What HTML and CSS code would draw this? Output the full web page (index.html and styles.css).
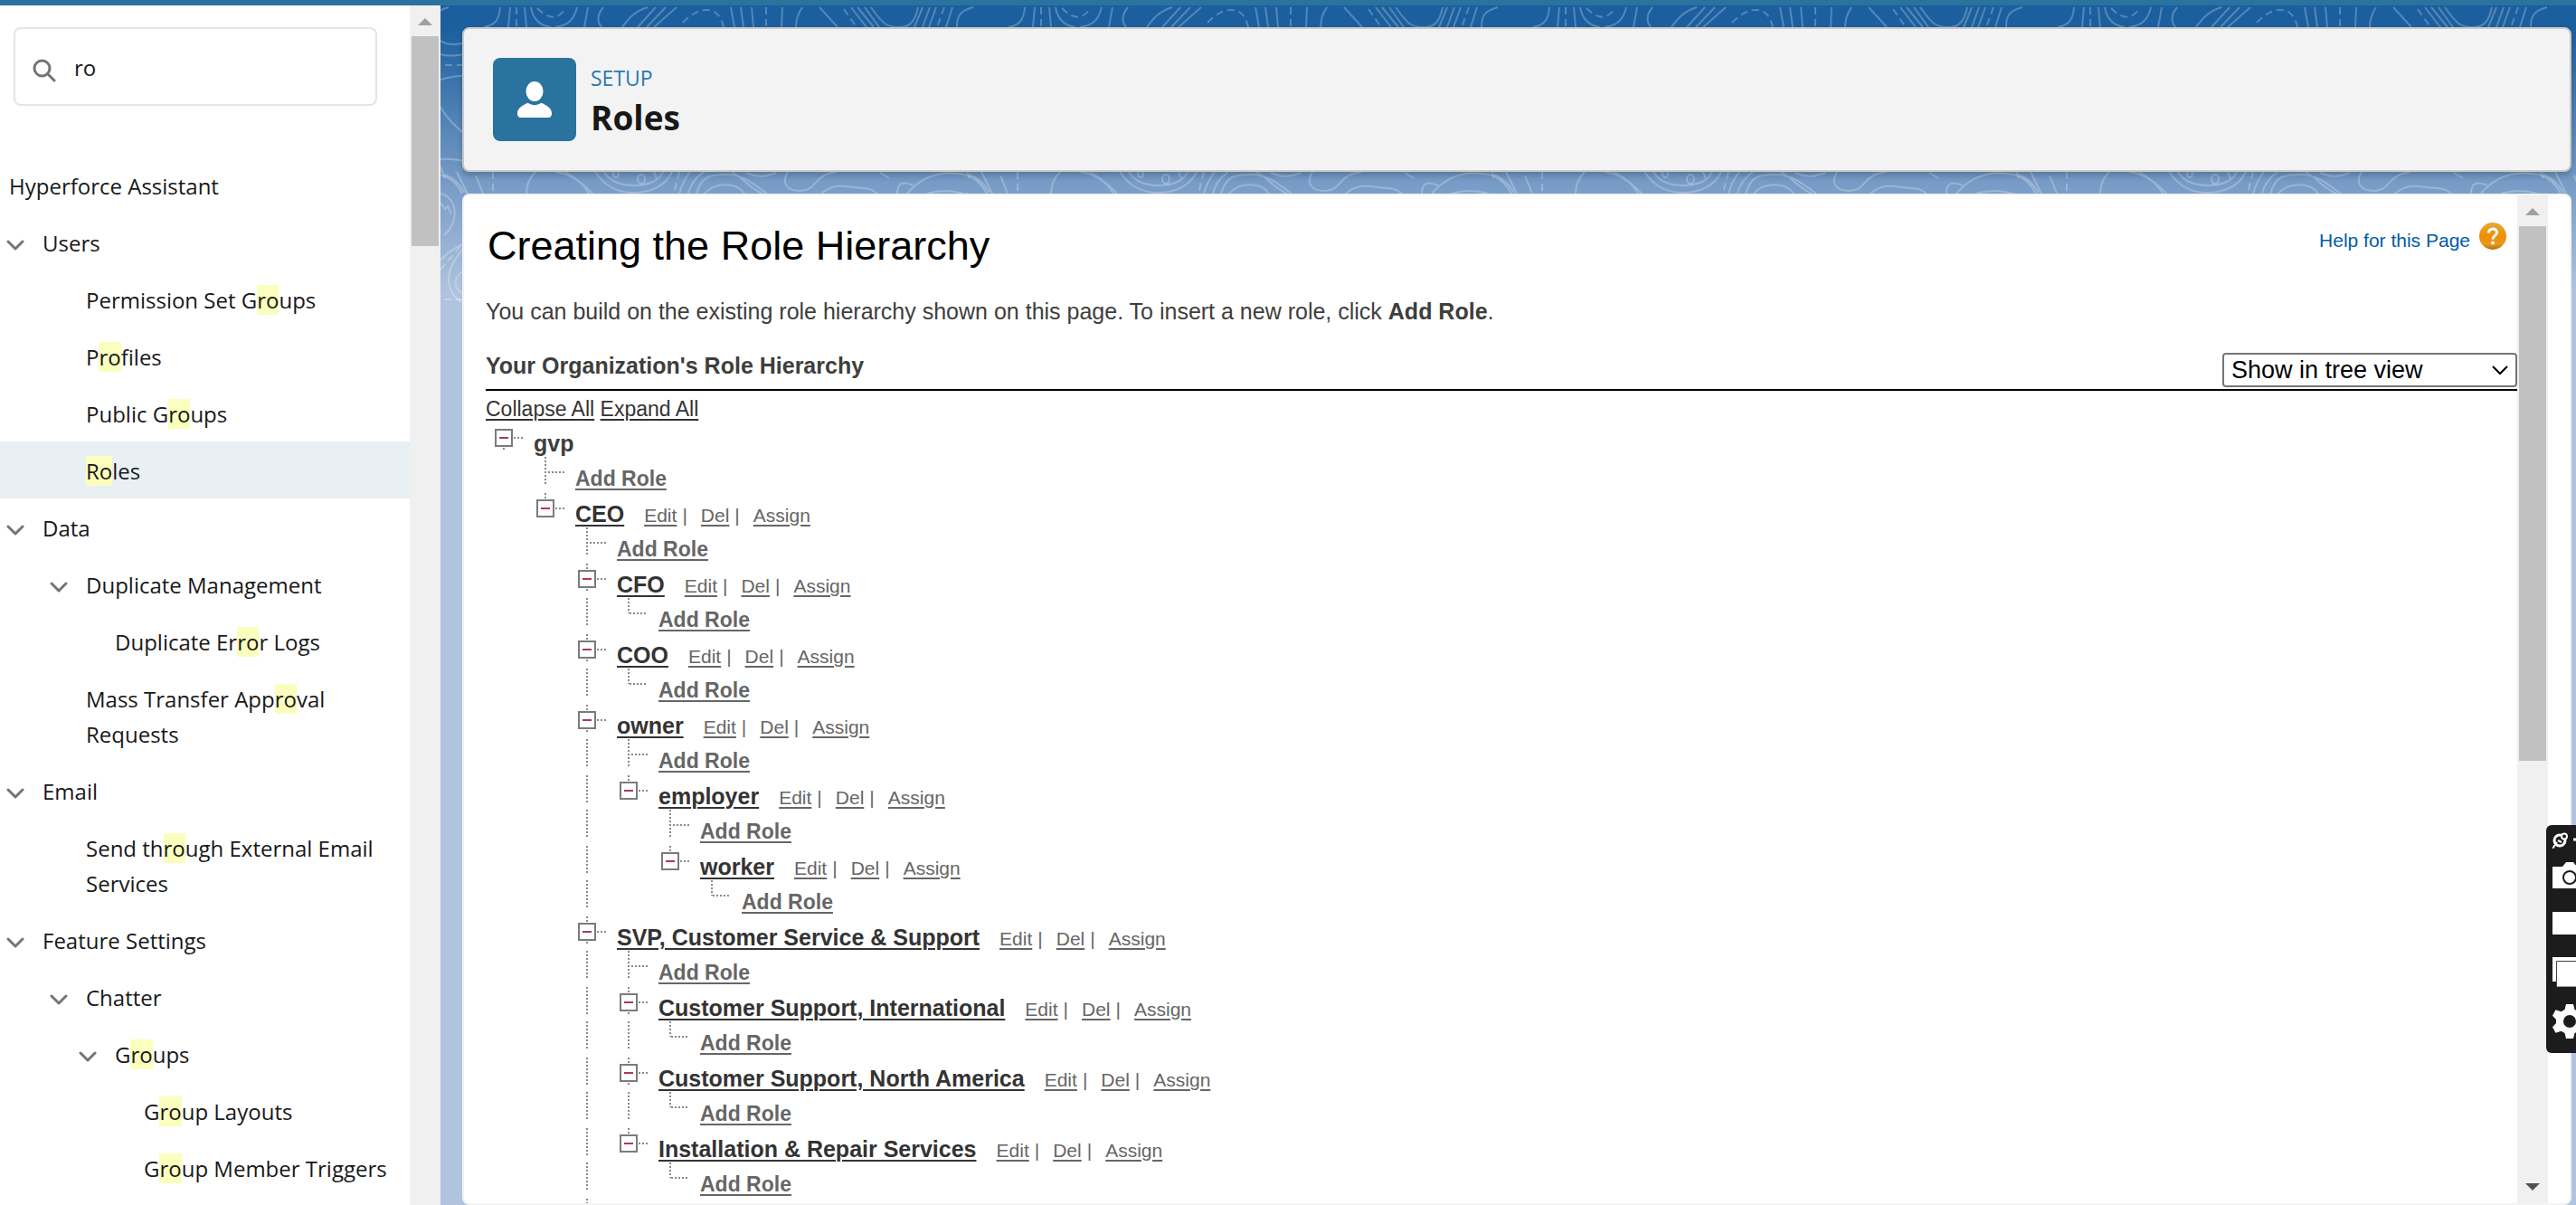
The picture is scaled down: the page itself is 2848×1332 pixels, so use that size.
FILE: index.html
```html
<!DOCTYPE html>
<html lang="en">
<head>
<meta charset="utf-8">
<title>Roles | Setup</title>
<link rel="stylesheet" href="styles.css">
</head>
<body>
<svg class="defs" aria-hidden="true">
  <defs>
    <symbol id="chevron" viewBox="0 0 20 12"><path d="M2 2l8 8 8-8" fill="none" stroke="#747474" stroke-width="3" stroke-linecap="round" stroke-linejoin="round"/></symbol>
    <symbol id="up" viewBox="0 0 16 8"><path d="M8 0l8 8H0z"/></symbol>
    <symbol id="down" viewBox="0 0 16 8"><path d="M0 0h16L8 8z"/></symbol>
    <g id="minus"><rect x="8" y="8" width="18" height="18" fill="#fff" stroke="#7b7b7b" stroke-width="2"/><path d="M12 17h10" stroke="#b03a4c" stroke-width="2"/><path class="dots" d="M28 17h11"/></g>
    <g id="v"><path class="dots" d="M17 0v31"/></g>
    <g id="tee"><path class="dots" d="M17 0v31M20 17h18"/></g>
    <g id="elbow"><path class="dots" d="M17 0v17M18 17h20"/></g>
    <g id="root"><use href="#minus"/><path class="dots" d="M17 28v2"/></g>
    <g id="last"><use href="#minus"/><path class="dots" d="M17 0v6"/></g>
    <g id="mid"><use href="#minus"/><path class="dots" d="M17 0v6M17 28v2"/></g>
    <g id="contours">
      <path d="M66 8C65 22 60 28 48 30M77 8l-2 22M93 8l2 22M100 8c2 12 8 20 22 22M151 8c-3 12-8 20-24 22M163 8l-4 22M180 8q-10 12-2 22M229 8c-16 5-22 14-28 22M238 8l-20 22M249 8l-21 22M261 8l-25 22M321 8l4 22M332 8l3 22M344 8l2 22M378 8l-1 22M400 8q-7 10-7 22M419 8l20 22M454 8l17 22M461 8l18 22M469 8l16 22M476 8c14 20 18 22 32 22 12 0 17-8 20-22M533 8l-9 22M541 8l-8 22M548 8l-8 22M566 8l-7 22M589 8c-15 4-18 10-18 22"/>
      <path stroke-dasharray="8 5" d="M84 8v22M107 9c12 12 22 14 32 0M268 25c8-8 16-14 26-14s16 6 19 19M360 8v22M446 10l14 20M557 8l-8 22"/>
      <path d="M0 45q12 8 34 0M0 60q12 4 34-2M0 88q12-4 34-5M0 118q8 16 34 36M0 176q16-1 34 4M0 184l5 13M5 193q14 6 22 20M0 214c18 4 22 30 4 46M0 224l5 7 3-3 4 9M0 288q8-10 24-18M30 270c-30 30-24 54-6 64M24 300c-10 8-10 18 0 24"/>
      <path stroke-dasharray="8 5" d="M5 72h30M0 298l24-28M4 331h20"/>
      <path d="M39 194l8 20M105 190q-10 10-10 24M127 190c16 2 30 12 41 24M138 190q18 10 26 24M171 190c10 14 22 23 42 23s36-8 43-23M181 190c6 10 18 15 33 15s28-5 32-15M276 190q-8 10-12 24M291 190q-14 10-17 24M283 214c6-20 16-21 33-21 20 0 32 12 45 21M292 214c10-12 34-14 44 0M322 190c14 8 20 18 34 24M338 191c14 6 22 4 33 0M384 190c-8 14 0 21 14 21 18 0 14-18 40-21M421 214c16-14 30-6 46-6 8 0 12 3 16 6M486 191l10 6M505 214c0-12 6-14 18-9M516 214c18-22 40-24 56-22 16 1 26 10 32 22M538 214q20-6 40 0M598 190l12 24"/>
      <ellipse cx="222" cy="198" rx="4" ry="5"/><ellipse cx="194" cy="192" rx="3" ry="4"/>
      <path stroke-dasharray="8 5" d="M58 190v24M264 190l-6 24M236 190l4 10"/>
    </g>
    <pattern id="topo" width="580" height="420" patternUnits="userSpaceOnUse"><g fill="none" stroke="#fff" stroke-opacity=".25" stroke-width="2"><use href="#contours"/><use href="#contours" x="-580"/></g></pattern>
  </defs>
</svg>

<div class="app">
  <nav class="sidebar" aria-label="Setup">
    <div class="side-body">
      <label class="search">
        <svg viewBox="0 0 26 26" aria-hidden="true"><circle cx="10.500" cy="10.500" r="8.500" fill="none" stroke="#747474" stroke-width="3"/><path d="M16.500 16.500L24 24" stroke="#747474" stroke-width="3" stroke-linecap="round"/></svg>
        <input type="text" value="ro" aria-label="Quick Find">
      </label>
      <ul class="menu">
        <li class="top"><a href="#">Hyperforce Assistant</a></li>
        <li class="l1"><button aria-label="Toggle Users"><svg><use href="#chevron"/></svg></button><a href="#">Users</a></li>
        <li class="l2"><a href="#">Permission Set G<mark>ro</mark>ups</a></li>
        <li class="l2"><a href="#">P<mark>ro</mark>files</a></li>
        <li class="l2"><a href="#">Public G<mark>ro</mark>ups</a></li>
        <li class="l2 active"><a href="#"><mark>Ro</mark>les</a></li>
        <li class="l1"><button aria-label="Toggle Data"><svg><use href="#chevron"/></svg></button><a href="#">Data</a></li>
        <li class="l2"><button aria-label="Toggle Duplicate Management"><svg><use href="#chevron"/></svg></button><a href="#">Duplicate Management</a></li>
        <li class="l3"><a href="#">Duplicate Er<mark>ro</mark>r Logs</a></li>
        <li class="l2"><a href="#">Mass Transfer App<mark>ro</mark>val Requests</a></li>
        <li class="l1"><button aria-label="Toggle Email"><svg><use href="#chevron"/></svg></button><a href="#">Email</a></li>
        <li class="l2"><a href="#">Send th<mark>ro</mark>ugh External Email Services</a></li>
        <li class="l1"><button aria-label="Toggle Feature Settings"><svg><use href="#chevron"/></svg></button><a href="#">Feature Settings</a></li>
        <li class="l2"><button aria-label="Toggle Chatter"><svg><use href="#chevron"/></svg></button><a href="#">Chatter</a></li>
        <li class="l3"><button aria-label="Toggle Groups"><svg><use href="#chevron"/></svg></button><a href="#">G<mark>ro</mark>ups</a></li>
        <li class="l4"><a href="#">G<mark>ro</mark>up Layouts</a></li>
        <li class="l4"><a href="#">G<mark>ro</mark>up Member Triggers</a></li>
      </ul>
    </div>
    <div class="scrollbar"><svg class="arrow"><use href="#up"/></svg><div class="thumb side-thumb"></div></div>
  </nav>

  <main class="stage">
    <svg class="topo" aria-hidden="true"><g transform="translate(0 -6)"><rect width="100%" height="420" fill="url(#topo)"/></g></svg>
    <header class="card">
      <div class="badge"><svg viewBox="0 0 40 42" aria-hidden="true"><ellipse cx="20" cy="11.500" rx="10" ry="11.500" fill="#fff"/><path d="M12 25q8 5 16 0c6 3 12 6 12 12q0 5-4 5H4q-4 0-4-5c0-6 6-9 12-12z" fill="#fff"/></svg></div>
      <div class="heading"><p class="eyebrow">SETUP</p><h1>Roles</h1></div>
    </header>
    <section class="panel">
      <div class="content">
        <div class="title-row">
          <h2>Creating the Role Hierarchy</h2>
          <a class="help" href="#">Help for this Page
            <svg viewBox="0 0 30 30" aria-hidden="true"><defs><linearGradient id="amber" x2="0" y2="1"><stop offset="0" stop-color="#e5a93c"/><stop offset=".5" stop-color="#ef8e00"/><stop offset=".8" stop-color="#e99a1c"/><stop offset="1" stop-color="#a9700f"/></linearGradient></defs><circle cx="15" cy="15" r="15" fill="url(#amber)"/><path d="M10.500 11.500c0-6 9-6 9-.5 0 3.500-4.500 3.500-4.500 7.500" fill="none" stroke="#fff" stroke-width="3"/><circle cx="15" cy="22.500" r="2" fill="#fff"/></svg></a>
        </div>
        <p class="intro">You can build on the existing role hierarchy shown on this page. To insert a new role, click <b>Add Role</b>.</p>
        <div class="sub-row">
          <h3>Your Organization's Role Hierarchy</h3>
          <div class="view">
            <select aria-label="View"><option>Show in tree view</option></select>
            <svg viewBox="0 0 18 11" aria-hidden="true"><path d="M1 1l8 8 8-8" fill="none" stroke="#000" stroke-width="2"/></svg>
          </div>
        </div>
        <p class="all"><a href="#">Collapse All</a> <a href="#">Expand All</a></p>
        <ul class="tree">
          <li><button aria-label="Collapse gvp"><svg><use href="#root"/></svg></button><div class="node"><b>gvp</b></div></li>
          <li class="add"><i></i><svg><use href="#tee"/></svg><div class="node"><a href="#">Add Role</a></div></li>
          <li><i></i><button aria-label="Collapse CEO"><svg><use href="#last"/></svg></button><div class="node"><a href="#">CEO</a><span><a href="#">Edit</a><s>|</s><a href="#">Del</a><s>|</s><a href="#">Assign</a></span></div></li>
          <li class="add"><i></i><i></i><svg><use href="#tee"/></svg><div class="node"><a href="#">Add Role</a></div></li>
          <li><i></i><i></i><button aria-label="Collapse CFO"><svg><use href="#mid"/></svg></button><div class="node"><a href="#">CFO</a><span><a href="#">Edit</a><s>|</s><a href="#">Del</a><s>|</s><a href="#">Assign</a></span></div></li>
          <li class="add"><i></i><i></i><svg><use href="#v"/></svg><svg><use href="#elbow"/></svg><div class="node"><a href="#">Add Role</a></div></li>
          <li><i></i><i></i><button aria-label="Collapse COO"><svg><use href="#mid"/></svg></button><div class="node"><a href="#">COO</a><span><a href="#">Edit</a><s>|</s><a href="#">Del</a><s>|</s><a href="#">Assign</a></span></div></li>
          <li class="add"><i></i><i></i><svg><use href="#v"/></svg><svg><use href="#elbow"/></svg><div class="node"><a href="#">Add Role</a></div></li>
          <li><i></i><i></i><button aria-label="Collapse owner"><svg><use href="#mid"/></svg></button><div class="node"><a href="#">owner</a><span><a href="#">Edit</a><s>|</s><a href="#">Del</a><s>|</s><a href="#">Assign</a></span></div></li>
          <li class="add"><i></i><i></i><svg><use href="#v"/></svg><svg><use href="#tee"/></svg><div class="node"><a href="#">Add Role</a></div></li>
          <li><i></i><i></i><svg><use href="#v"/></svg><button aria-label="Collapse employer"><svg><use href="#last"/></svg></button><div class="node"><a href="#">employer</a><span><a href="#">Edit</a><s>|</s><a href="#">Del</a><s>|</s><a href="#">Assign</a></span></div></li>
          <li class="add"><i></i><i></i><svg><use href="#v"/></svg><i></i><svg><use href="#tee"/></svg><div class="node"><a href="#">Add Role</a></div></li>
          <li><i></i><i></i><svg><use href="#v"/></svg><i></i><button aria-label="Collapse worker"><svg><use href="#last"/></svg></button><div class="node"><a href="#">worker</a><span><a href="#">Edit</a><s>|</s><a href="#">Del</a><s>|</s><a href="#">Assign</a></span></div></li>
          <li class="add"><i></i><i></i><svg><use href="#v"/></svg><i></i><i></i><svg><use href="#elbow"/></svg><div class="node"><a href="#">Add Role</a></div></li>
          <li><i></i><i></i><button aria-label="Collapse SVP, Customer Service &amp; Support"><svg><use href="#mid"/></svg></button><div class="node"><a href="#">SVP, Customer Service &amp; Support</a><span><a href="#">Edit</a><s>|</s><a href="#">Del</a><s>|</s><a href="#">Assign</a></span></div></li>
          <li class="add"><i></i><i></i><svg><use href="#v"/></svg><svg><use href="#tee"/></svg><div class="node"><a href="#">Add Role</a></div></li>
          <li><i></i><i></i><svg><use href="#v"/></svg><button aria-label="Collapse Customer Support, International"><svg><use href="#mid"/></svg></button><div class="node"><a href="#">Customer Support, International</a><span><a href="#">Edit</a><s>|</s><a href="#">Del</a><s>|</s><a href="#">Assign</a></span></div></li>
          <li class="add"><i></i><i></i><svg><use href="#v"/></svg><svg><use href="#v"/></svg><svg><use href="#elbow"/></svg><div class="node"><a href="#">Add Role</a></div></li>
          <li><i></i><i></i><svg><use href="#v"/></svg><button aria-label="Collapse Customer Support, North America"><svg><use href="#mid"/></svg></button><div class="node"><a href="#">Customer Support, North America</a><span><a href="#">Edit</a><s>|</s><a href="#">Del</a><s>|</s><a href="#">Assign</a></span></div></li>
          <li class="add"><i></i><i></i><svg><use href="#v"/></svg><svg><use href="#v"/></svg><svg><use href="#elbow"/></svg><div class="node"><a href="#">Add Role</a></div></li>
          <li><i></i><i></i><svg><use href="#v"/></svg><button aria-label="Collapse Installation &amp; Repair Services"><svg><use href="#last"/></svg></button><div class="node"><a href="#">Installation &amp; Repair Services</a><span><a href="#">Edit</a><s>|</s><a href="#">Del</a><s>|</s><a href="#">Assign</a></span></div></li>
          <li class="add"><i></i><i></i><svg><use href="#v"/></svg><i></i><svg><use href="#elbow"/></svg><div class="node"><a href="#">Add Role</a></div></li>
          <li><i></i><i></i><svg><use href="#v"/></svg></li>
        </ul>
      </div>
      <div class="scrollbar"><svg class="arrow"><use href="#up"/></svg><div class="thumb main-thumb"></div><svg class="arrow end"><use href="#down"/></svg></div>
    </section>
  </main>
</div>

<aside class="capture" aria-label="Screen capture">
  <button aria-label="Pin"><svg viewBox="0 0 38 18" height="18"><path d="M0 18l5-7" stroke="#fff" stroke-width="2"/><circle cx="8" cy="9" r="6" fill="none" stroke="#fff" stroke-width="3"/><circle cx="13" cy="4.500" r="3" fill="#1c1c1c" stroke="#fff" stroke-width="2"/><path d="M6 9l4 2" stroke="#fff" stroke-width="2"/><path d="M23 8h9" stroke="#fff" stroke-width="3"/></svg></button>
  <button aria-label="Capture screen"><svg viewBox="0 0 38 30" height="30"><path d="M0 5h11l4-5h8l4 5h11v24H0z" fill="#fff"/><circle cx="19" cy="17" r="7" fill="#fff" stroke="#1c1c1c" stroke-width="2"/></svg></button>
  <button aria-label="Capture region"><svg viewBox="0 0 38 25" height="25"><path d="M0 0h38v25H0z" fill="#fff"/></svg></button>
  <button aria-label="Capture window"><svg viewBox="0 0 38 33" height="33"><path d="M0 0h34v27H0z" fill="#fff"/><path d="M4.500 33V4.500H38V33z" fill="#fff" stroke="#444" stroke-width="1"/></svg></button>
  <button aria-label="Settings"><svg viewBox="0 0 38 38" height="38"><path d="M15 0h8l1.500 6 4 2.300 6-2 3.500 6.500-4 4.200v4l4 4.200-3.500 6.500-6-2-4 2.300L23 38h-8l-1.500-6-4-2.300-6 2L0 25.200 4 21v-4l-4-4.200 3.500-6.500 6 2 4-2.300z" fill="#fff"/><circle cx="19" cy="19" r="7" fill="#1c1c1c"/></svg></button>
</aside>
</body>
</html>
```
FILE: styles.css
```css
* { box-sizing: border-box; }
body { margin: 0; overflow: hidden; font-family: "Liberation Sans", Arial, sans-serif; color: #3e3e3c; }
h1, h2, h3, p, ul { margin: 0; padding: 0; }
ul { list-style: none; }
button { padding: 0; border: 0; background: none; }
.defs { position: absolute; width: 0; height: 0; }
.app { display: flex; height: 100vh; border-top: 6px solid #2a739e; }

.sidebar { display: flex; flex: 0 0 487px; background: #fff; font-family: "Open Sans", "Noto Sans", sans-serif; font-size: 24px; color: #181818; overflow: hidden; }
.side-body { flex: 1; overflow: hidden; }
.search { display: flex; align-items: center; gap: 20px; height: 87px; margin: 24px 36px 56px 15px; padding: 0 19px; border: 2px solid #e5e5e5; border-radius: 8px; }
.search svg { flex: none; width: 26px; height: 26px; margin-top: 8px; }
.search input { flex: 1; min-width: 0; padding: 2px 0 0; border: 0; outline: 0; background: none; font: inherit; color: inherit; }
.menu li { display: flex; padding: 13px 12px 11px 10px; line-height: 39px; }
.menu a { color: inherit; text-decoration: none; }
.menu button { flex: none; width: 20px; height: 12px; margin: 16px 20px 0 -40px; }
.menu svg { display: block; width: 20px; height: 12px; }
.menu mark { background: #faffbd; color: inherit; }
.menu .l1 { padding-left: 47px; }
.menu .l2 { padding-left: 95px; }
.menu .l3 { padding-left: 127px; }
.menu .l4 { padding-left: 159px; }
.menu .active { background: #e8f0f4; }

.scrollbar { display: flex; flex-direction: column; align-items: center; flex: 0 0 34px; background: #f0f0f0; }
.arrow { width: 16px; height: 8px; margin: 14px 0 12px; fill: #a0a0a0; }
.arrow.end { margin: auto 0 14px; fill: #505050; }
.thumb { width: 30px; background: #c1c1c1; }
.side-thumb { height: 232px; }
.main-thumb { height: 591px; }

.stage { position: relative; display: flex; flex: 1; min-width: 0; flex-direction: column; gap: 24px; padding: 24px 5px 0 24px; background: linear-gradient(#1b5f9e 0, #1b5f9e 24px, #7399c5 190px, #b0c4df 320px); }
.topo { position: absolute; inset: 0; width: 100%; height: 414px; }
.card { position: relative; display: flex; flex: none; align-items: center; gap: 16px; height: 160px; padding: 0 32px; border: 2px solid #c9c9c9; border-radius: 8px; background: #f3f3f3; box-shadow: 0 4px 6px rgba(0, 0, 0, .2); }
.badge { display: grid; place-items: center; width: 92px; height: 92px; border-radius: 8px; background: #2a739e; }
.badge svg { width: 40px; height: 40px; }
.heading { padding-top: 4px; font-family: "Open Sans", "Noto Sans", sans-serif; }
.eyebrow { font-size: 23px; line-height: 36px; color: #2b78b0; }
h1 { font-size: 37px; line-height: 52px; color: #181818; }

.panel { position: relative; display: flex; flex: 1; min-height: 0; padding-right: 24px; border: 2px solid #f3f3f3; border-radius: 8px; background: #fff; overflow: hidden; }
.content { flex: 1; min-width: 0; padding: 28px 0 0 24px; }
.title-row { display: flex; justify-content: space-between; align-items: flex-start; padding-left: 2px; }
h2 { font-size: 45px; line-height: 56px; font-weight: 400; color: #000; }
.help { display: flex; align-items: flex-start; gap: 10px; padding-right: 12px; font-size: 21px; line-height: 44px; color: #015ba7; text-decoration: none; }
.help svg { width: 30px; height: 30px; margin-top: 2px; }
.intro { margin-top: 24px; font-size: 25px; line-height: 40px; }
.sub-row { display: flex; justify-content: space-between; align-items: flex-start; margin-top: 26px; height: 42px; border-bottom: 2px solid #000; }
h3 { font-size: 25px; line-height: 28px; }
.view { display: grid; align-items: center; width: 326px; }
.view > * { grid-area: 1 / 1; }
.view select { height: 38px; width: 100%; padding: 0 8px; border: 2px solid #767676; border-radius: 4px; background: #fff; appearance: none; font: 27px "Liberation Sans", Arial, sans-serif; color: #000; }
.view svg { justify-self: end; width: 18px; height: 11px; margin-right: 10px; pointer-events: none; }
.all { padding-top: 6px; font-size: 23px; line-height: 29px; }
.all a { color: #333; text-underline-offset: 3px; text-decoration-thickness: 2px; }
.tree { padding-left: 3px; }
.tree li { display: flex; height: 38px; }
.tree .add { height: 40px; }
.tree li > svg, .tree li > i, .tree button { flex: none; width: 46px; height: 32px; }
.tree button svg { display: block; width: 46px; height: 32px; }
.dots { fill: none; stroke: #8a8a8a; stroke-width: 2; stroke-dasharray: 2 2; }
.node { padding: 6px 0 0 4px; font-size: 25px; line-height: 34px; font-weight: 700; white-space: nowrap; }
.node a { color: #333; text-underline-offset: 3px; text-decoration-thickness: 2px; }
.node span { margin-left: 22px; font-size: 21px; font-weight: 400; color: #666; }
.node span a { color: #666; }
.node s { margin: 0 15px 0 6px; text-decoration: none; }
.add .node a { font-size: 23px; color: #666; }

.capture { position: fixed; top: 912px; right: 0; display: flex; flex-direction: column; width: 33px; height: 252px; padding: 8px 0 0 7px; border-radius: 6px 0 0 6px; background: #1c1c1c; overflow: hidden; }
.capture button { width: 38px; margin-bottom: 25px; }
.capture button:first-child { margin-bottom: 15px; }
.capture button:nth-child(4) { margin-bottom: 19px; }
.capture svg { display: block; width: 38px; }
```
